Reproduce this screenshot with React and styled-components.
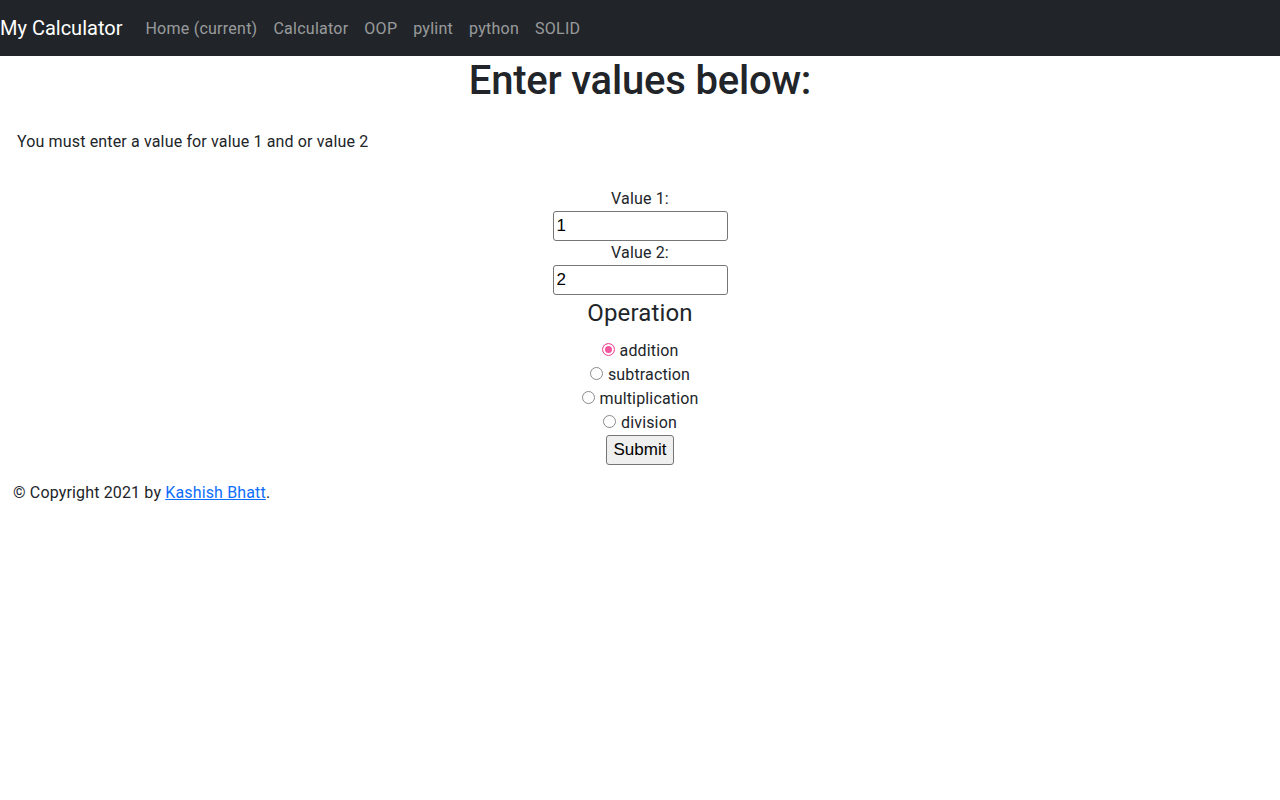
import React from "react";
import styled, { createGlobalStyle } from "styled-components";

const Global = createGlobalStyle`
  * { box-sizing: border-box; }
  body {
    margin: 0;
    font-family: Roboto, "Noto Sans", "Liberation Sans", sans-serif;
    font-size: 16px;
    line-height: 1.5;
    letter-spacing: 0.15px;
    color: #212529;
    background: #fff;
  }
`;

const Navbar = styled.nav`
  height: 56px;
  background: #212529;
  display: flex;
  align-items: center;
`;

const Brand = styled.a`
  color: #fff;
  font-size: 20px;
  line-height: 30px;
  margin-right: 15px;
  letter-spacing: 0;
  text-decoration: none;
`;

const NavList = styled.ul`
  display: flex;
  list-style: none;
  margin: 1px 0 0;
  padding: 0;
`;

const NavLink = styled.a`
  display: block;
  padding: 8px;
  color: rgba(255, 255, 255, 0.55);
  text-decoration: none;
  font-size: 16px;
  letter-spacing: 0.25px;
`;

const Title = styled.h1`
  margin: 0 0 8px;
  text-align: center;
  font-size: 40px;
  font-weight: 500;
  line-height: 50px;
  letter-spacing: -0.2px;
`;

const Message = styled.p`
  margin: 24px 0 33px;
  padding-left: 17px;
`;

const Form = styled.form`
  display: flex;
  flex-direction: column;
  align-items: center;
`;

const Label = styled.label`
  display: block;
  line-height: 24px;
`;

const TextInput = styled.input`
  width: 175px;
  height: 30px;
  border: 1px solid #767676;
  border-radius: 3px;
  padding: 0 3px;
  font-family: "Liberation Sans", Arial, sans-serif;
  font-size: 17px;
  letter-spacing: 0;
  color: #000;
`;

const Heading = styled.h3`
  margin: 4px 0 11px;
  font-size: 24px;
  font-weight: 400;
  line-height: 29px;
`;

const RadioRow = styled.div`
  display: flex;
  align-items: center;
  height: 24px;
  font-size: 16px;
`;

const Radio = styled.input.attrs({ type: "radio" })`
  appearance: none;
  width: 13px;
  height: 13px;
  margin: 0 5px 3px 0;
  border-radius: 50%;
  border: 1px solid #8a8a8a;
  background: #fff;
  &:checked {
    border-color: #f0559e;
    background: #f0559e;
    box-shadow: inset 0 0 0 2px #fff;
  }
`;

const SubmitButton = styled.button`
  height: 30px;
  padding: 0 7px;
  background: #efefef;
  border: 1px solid #767676;
  border-radius: 3px;
  font-family: "Liberation Sans", Arial, sans-serif;
  font-size: 17px;
  letter-spacing: 0;
  color: #000;
`;

const Footer = styled.footer`
  margin-top: 16px;
  padding-left: 13px;
  line-height: 24px;
`;

const Link = styled.a`
  color: #0d6efd;
  text-decoration: underline;
`;

const ops = ["addition", "subtraction", "multiplication", "division"];

export default function App() {
  return (
    <>
      <Global />
      <Navbar>
        <Brand href="#">My Calculator</Brand>
        <NavList>
          {["Home (current)", "Calculator", "OOP", "pylint", "python", "SOLID"].map((l) => (
            <li key={l}>
              <NavLink href="#">{l}</NavLink>
            </li>
          ))}
        </NavList>
      </Navbar>
      <Title>Enter values below:</Title>
      <Message>You must enter a value for value 1 and or value 2</Message>
      <Form onSubmit={(e) => e.preventDefault()}>
        <Label htmlFor="v1">Value 1:</Label>
        <TextInput id="v1" defaultValue="1" />
        <Label htmlFor="v2">Value 2:</Label>
        <TextInput id="v2" defaultValue="2" />
        <Heading>Operation</Heading>
        {ops.map((o, i) => (
          <RadioRow key={o}>
            <Radio name="op" id={o} defaultChecked={i === 0} />
            <label htmlFor={o}>{o}</label>
          </RadioRow>
        ))}
        <SubmitButton type="submit">Submit</SubmitButton>
      </Form>
      <Footer>
        © Copyright 2021 by <Link href="#">Kashish Bhatt</Link>.
      </Footer>
    </>
  );
}
